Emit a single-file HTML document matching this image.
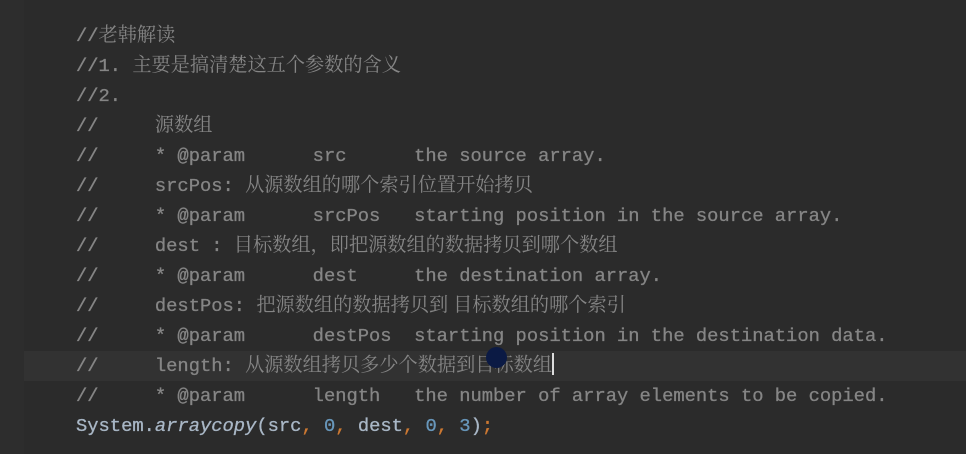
<!DOCTYPE html>
<html><head><meta charset="utf-8"><style>
body{margin:0;width:966px;height:454px;background:#2b2b2b;overflow:hidden;position:relative}
.g{position:absolute;left:0;top:0;width:24px;height:454px;background:#2d2d2d}
.hl{position:absolute;left:24px;top:351px;width:942px;height:30px;background:#323232}
.l{position:absolute;left:76px;height:30px;font-family:"Liberation Mono","Noto Sans CJK SC",monospace;font-size:18.8px;line-height:30px;white-space:pre;color:#858585;-webkit-text-stroke:0.3px}
.c{font-family:"Noto Serif CJK SC","Noto Sans CJK SC",serif;font-size:19.2px;line-height:1;-webkit-text-stroke:0}
.t{color:#a9b7c6}.n{color:#6897bb}.p{color:#cc7832}
.cur{display:inline-block;width:2px;height:22px;background:#ddd;vertical-align:-4px}
.dot{position:absolute;left:486px;top:347px;width:21px;height:21px;border-radius:50%;background:#0b1a44}
</style></head><body>
<div class="g"></div><div class="hl"></div>
<div class="l" style="top:21px">//<span class="c">老韩解读</span></div>
<div class="l" style="top:51px">//1. <span class="c">主要是搞清楚这五个参数的含义</span></div>
<div class="l" style="top:81px">//2.</div>
<div class="l" style="top:111px">//     <span class="c">源数组</span></div>
<div class="l" style="top:141px">//     * @param      src      the source array.</div>
<div class="l" style="top:171px">//     srcPos: <span class="c">从源数组的哪个索引位置开始拷贝</span></div>
<div class="l" style="top:201px">//     * @param      srcPos   starting position in the source array.</div>
<div class="l" style="top:231px">//     dest : <span class="c">目标数组，即把源数组的数据拷贝到哪个数组</span></div>
<div class="l" style="top:261px">//     * @param      dest     the destination array.</div>
<div class="l" style="top:291px">//     destPos: <span class="c">把源数组的数据拷贝到 目标数组的哪个索引</span></div>
<div class="l" style="top:321px">//     * @param      destPos  starting position in the destination data.</div>
<div class="l" style="top:351px">//     length: <span class="c">从源数组拷贝多少个数据到目标数组</span><span class="cur"></span></div>
<div class="l" style="top:381px">//     * @param      length   the number of array elements to be copied.</div>
<div class="l t" style="top:411px">System.<i>arraycopy</i>(src<span class="p">, </span><span class="n">0</span><span class="p">, </span>dest<span class="p">, </span><span class="n">0</span><span class="p">, </span><span class="n">3</span>)<span class="p">;</span></div>
<div class="dot"></div>
</body></html>
